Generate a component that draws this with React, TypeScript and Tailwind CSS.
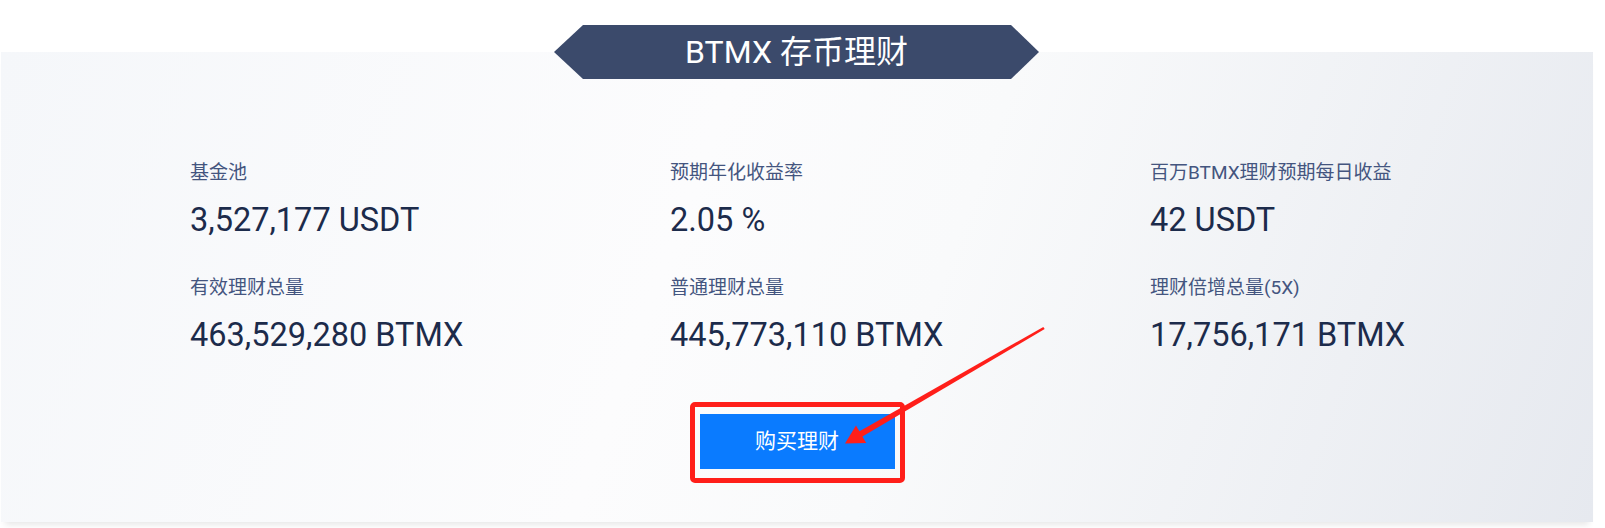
import React from "react";

interface Stat {
  label: string;
  value: string;
}

const stats: Stat[] = [
  { label: "基金池", value: "3,527,177 USDT" },
  { label: "预期年化收益率", value: "2.05 %" },
  { label: "百万BTMX理财预期每日收益", value: "42 USDT" },
  { label: "有效理财总量", value: "463,529,280 BTMX" },
  { label: "普通理财总量", value: "445,773,110 BTMX" },
  { label: "理财倍增总量(5X)", value: "17,756,171 BTMX" },
];

export default function App() {
  return (
    <div className="relative w-full h-[528px] overflow-hidden bg-white font-['Roboto','Noto_Sans_CJK_SC',sans-serif]">
      <div className="w-[1593px] pt-[25px] flex flex-col items-center">
        {/* title banner */}
        <div className="relative z-10 w-[485px] h-[54px] bg-[#3b4a6b] flex items-center justify-center text-white text-[32px] leading-none [clip-path:polygon(29px_0,calc(100%_-_28px)_0,100%_50%,calc(100%_-_28px)_100%,29px_100%,0_50%)]">
          BTMX 存币理财
        </div>

        {/* panel */}
        <div className="self-end -mt-[27px] w-[1592px] h-[470px] bg-[linear-gradient(110deg,#f5f7fa_0%,#fcfcfd_42%,#f9fafb_58%,#e6e9ef_100%)] shadow-[0_7px_6px_-4px_rgba(0,0,0,0.09)] flex flex-col">
          <div className="pl-[189px] pt-[109px] grid grid-cols-[480px_480px_1fr] gap-y-[36px]">
            {stats.map((s) => (
              <div key={s.label} className="flex flex-col">
                <span className="text-[19px] leading-[24px] text-[#44557f]">{s.label}</span>
                <span className="mt-[15px] text-[32.5px] leading-[40px] text-[#1c2b4b]">{s.value}</span>
              </div>
            ))}
          </div>

          <div className="mt-[47px] flex justify-center">
            <div className="border-[5px] border-[#ff1f1a] rounded-[5px] pt-[7px] pb-[9px] px-[5px]">
              <button className="w-[195px] h-[55px] bg-[#0a7bff] text-white text-[21px] leading-none">
                购买理财
              </button>
            </div>
          </div>
        </div>
      </div>

      {/* annotation arrow */}
      <svg
        className="absolute left-0 top-0 pointer-events-none"
        width="1605"
        height="528"
        viewBox="0 0 1605 528"
      >
        <polygon
          points="1044.7,329.1 1043.3,326.9 855.6,433.6 858.6,438.8"
          fill="#ff1f1a"
        />
        <polygon points="845,443.5 856,425.5 866.2,443" fill="#ff1f1a" />
      </svg>
    </div>
  );
}
